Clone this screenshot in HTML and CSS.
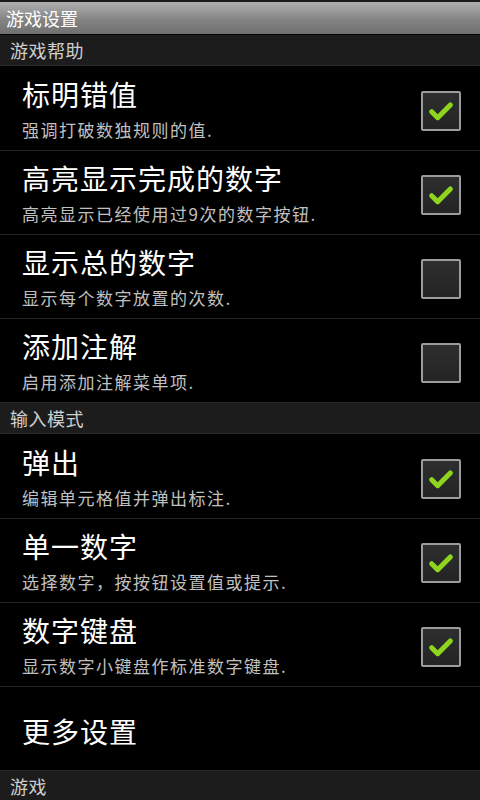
FILE: index.html
```html
<!DOCTYPE html>
<html lang="zh-CN">
<head>
<meta charset="utf-8">
<title>游戏设置</title>
<link rel="stylesheet" href="styles.css">
</head>
<body>
<div class="screen">
  <header class="titlebar">游戏设置</header>

  <div class="category">游戏帮助</div>
  <div class="pref">
    <div class="pref-text">
      <div class="pref-title">标明错值</div>
      <div class="pref-summary">强调打破数独规则的值.</div>
    </div>
    <span class="check on"><svg viewBox="0 0 24 24"><path d="M5 12.5l4.5 4.5L19 7.5"/></svg></span>
  </div>
  <div class="pref">
    <div class="pref-text">
      <div class="pref-title">高亮显示完成的数字</div>
      <div class="pref-summary">高亮显示已经使用过9次的数字按钮.</div>
    </div>
    <span class="check on"><svg viewBox="0 0 24 24"><path d="M5 12.5l4.5 4.5L19 7.5"/></svg></span>
  </div>
  <div class="pref">
    <div class="pref-text">
      <div class="pref-title">显示总的数字</div>
      <div class="pref-summary">显示每个数字放置的次数.</div>
    </div>
    <span class="check"></span>
  </div>
  <div class="pref">
    <div class="pref-text">
      <div class="pref-title">添加注解</div>
      <div class="pref-summary">启用添加注解菜单项.</div>
    </div>
    <span class="check"></span>
  </div>

  <div class="category">输入模式</div>
  <div class="pref">
    <div class="pref-text">
      <div class="pref-title">弹出</div>
      <div class="pref-summary">编辑单元格值并弹出标注.</div>
    </div>
    <span class="check on"><svg viewBox="0 0 24 24"><path d="M5 12.5l4.5 4.5L19 7.5"/></svg></span>
  </div>
  <div class="pref">
    <div class="pref-text">
      <div class="pref-title">单一数字</div>
      <div class="pref-summary">选择数字，按按钮设置值或提示.</div>
    </div>
    <span class="check on"><svg viewBox="0 0 24 24"><path d="M5 12.5l4.5 4.5L19 7.5"/></svg></span>
  </div>
  <div class="pref">
    <div class="pref-text">
      <div class="pref-title">数字键盘</div>
      <div class="pref-summary">显示数字小键盘作标准数字键盘.</div>
    </div>
    <span class="check on"><svg viewBox="0 0 24 24"><path d="M5 12.5l4.5 4.5L19 7.5"/></svg></span>
  </div>
  <div class="pref more">
    <div class="pref-text">
      <div class="pref-title">更多设置</div>
    </div>
  </div>

  <div class="category">游戏</div>
</div>
</body>
</html>
```

FILE: styles.css
```css
html, body {
  margin: 0;
  padding: 0;
  background: #000;
}

.screen {
  width: 480px;
  height: 800px;
  overflow: hidden;
  background: #000;
  font-family: "Noto Sans CJK SC", "Noto Sans", sans-serif;
  color: #fff;
}

.titlebar {
  height: 32px;
  border-top: 2px solid #1a1a1a;
  border-bottom: 1px solid #000;
  background: linear-gradient(#b0b0b0, #848484 55%, #707070);
  color: #fff;
  font-size: 18px;
  line-height: 32px;
  padding-left: 6px;
}

.category {
  height: 30px;
  line-height: 30px;
  padding-left: 10px;
  background: #1c1c1c;
  border-bottom: 1px solid #2c2c2c;
  color: #cfcfcf;
  font-size: 18px;
  letter-spacing: 0.5px;
}

.pref {
  display: flex;
  align-items: center;
  box-sizing: border-box;
  height: 84px;
  border-bottom: 1px solid #262626;
  padding: 1px 19px 0 22px;
}

/* first row under a category header is a pixel taller */
.category + .pref {
  height: 85px;
  padding-top: 2px;
}

.pref.more {
  padding-top: 5px;
}

.pref-text {
  flex: 1;
  display: flex;
  flex-direction: column;
  gap: 9px;
}

.pref-title {
  font-size: 28px;
  line-height: 32px;
  letter-spacing: 1px;
  color: #fff;
}

.pref-summary {
  font-size: 17px;
  line-height: 22px;
  letter-spacing: 1.5px;
  color: #c0c0c0;
}

.check {
  width: 36px;
  height: 36px;
  margin-top: 4px;
  border: 2px solid #9c9c9c;
  border-radius: 2px;
  background: linear-gradient(#2e2e2e, #242424);
  display: flex;
  align-items: center;
  justify-content: center;
}

.check svg {
  width: 32px;
  height: 32px;
}

.check svg path {
  fill: none;
  stroke: #8fd41e;
  stroke-width: 3.8;
  stroke-linecap: round;
  stroke-linejoin: round;
}
```
